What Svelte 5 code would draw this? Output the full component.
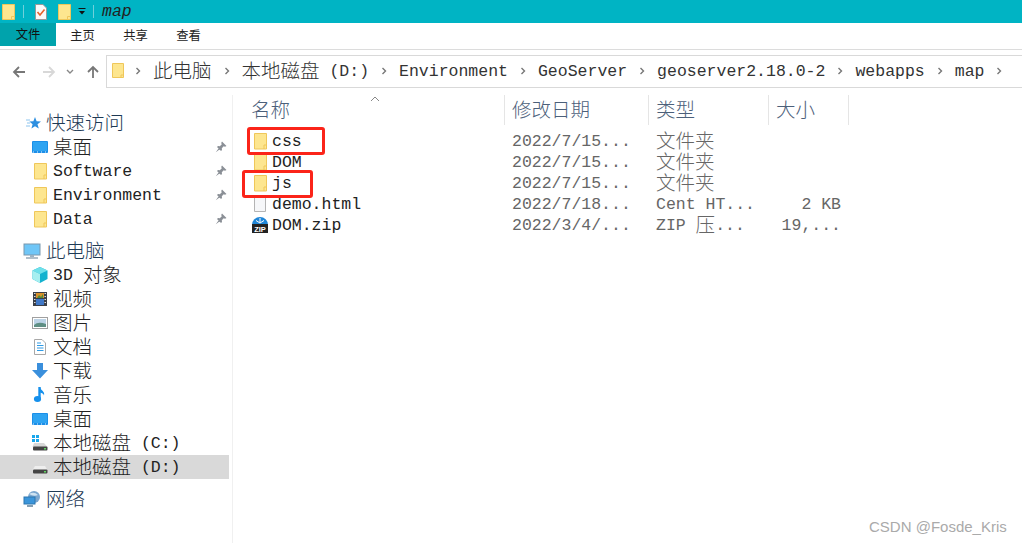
<script>
  const quick = [
    { label: '桌面', icon: 'desktop' },
    { label: 'Software', icon: 'folder' },
    { label: 'Environment', icon: 'folder' },
    { label: 'Data', icon: 'folder' }
  ];
  const pc = [
    { label: '3D 对象', icon: 'cube' },
    { label: '视频', icon: 'video' },
    { label: '图片', icon: 'picture' },
    { label: '文档', icon: 'docs' },
    { label: '下载', icon: 'download' },
    { label: '音乐', icon: 'music' },
    { label: '桌面', icon: 'desktop' },
    { label: '本地磁盘 (C:)', icon: 'sysdrive' },
    { label: '本地磁盘 (D:)', icon: 'drive', selected: true }
  ];
  const crumbs = ['此电脑', '本地磁盘 (D:)', 'Environment', 'GeoServer', 'geoserver2.18.0-2', 'webapps', 'map'];
  const files = [
    { name: 'css', date: '2022/7/15...', type: '文件夹', size: '', icon: 'folder' },
    { name: 'DOM', date: '2022/7/15...', type: '文件夹', size: '', icon: 'folder' },
    { name: 'js', date: '2022/7/15...', type: '文件夹', size: '', icon: 'folder' },
    { name: 'demo.html', date: '2022/7/18...', type: 'Cent HT...', size: '2 KB', icon: 'page' },
    { name: 'DOM.zip', date: '2022/3/4/...', type: 'ZIP 压...', size: '19,...', icon: 'zip' }
  ];

  // SimSun sets CJK at twice the width of latin, so split the two
  function runs(text) {
    return text.split(/([\u3000-\u9fff]+)/).filter(Boolean).map((t) => ({
      t,
      cjk: /[\u3000-\u9fff]/.test(t)
    }));
  }
</script>

{#snippet txt(text)}
  <span class="line">{#each runs(text) as r}<span class={r.cjk ? 'cjk' : 'lat'}>{r.t}</span>{/each}</span>
{/snippet}

{#snippet chevron()}
  <svg class="chev" width="6" height="8" viewBox="0 0 6 8"><path d="M1.5 1 L4.5 4 L1.5 7" fill="none" stroke="#777" stroke-width="1.4"/></svg>
{/snippet}

{#snippet icon(name)}
  <svg class="ico" width="18" height="18" viewBox="0 0 18 18">
    {#if name === 'folder'}
      <path d="M3.5 1.5 H15.5 V17 H3.5 Z" fill="#fde68f" stroke="#efc75a"/>
      <path d="M13 17 V13 H15.5" fill="none" stroke="#efc75a"/>
    {:else if name === 'desktop'}
      <rect x="1" y="3" width="16" height="12" rx="1" fill="#1c8fe8"/>
      <path d="M2 4 H16 V13 H2 Z" fill="#2ea4f2"/>
      <path d="M2 14 H16" stroke="#e6f4ff" stroke-dasharray="1 3"/>
    {:else if name === 'cube'}
      <path d="M9 1 L16.5 4.5 V13 L9 17 L1.5 13 V4.5 Z" fill="#14b2cf"/>
      <path d="M9 1 L16.5 4.5 L9 8 L1.5 4.5 Z" fill="#6fe0ea"/>
      <path d="M1.5 4.5 L9 8 V17 L1.5 13 Z" fill="#a6eff0"/>
    {:else if name === 'video'}
      <rect x="2" y="2" width="14" height="14" fill="#3a3f48"/>
      <path d="M3 3.5 h1.5 M3 6.5 h1.5 M3 9.5 h1.5 M3 12.5 h1.5 M13.5 3.5 h1.5 M13.5 6.5 h1.5 M13.5 9.5 h1.5 M13.5 12.5 h1.5" stroke="#ddd"/>
      <rect x="5" y="3" width="8" height="5" fill="#d8912a"/>
      <rect x="5" y="9" width="8" height="6" fill="#3f78c8"/>
      <path d="M6 8 L8 5 L10 7 L12 4 V8 Z" fill="#4f8a3a"/>
    {:else if name === 'picture'}
      <rect x="1.5" y="3.5" width="15" height="11" fill="#fff" stroke="#a0a0a0"/>
      <rect x="3" y="5" width="12" height="8" fill="#bcd3e6"/>
      <path d="M3 11 Q7 7 15 10 V13 H3 Z" fill="#5f8f84"/>
    {:else if name === 'docs'}
      <path d="M3.5 1.5 H11 L14.5 5 V16.5 H3.5 Z" fill="#fff" stroke="#a8a8a8"/>
      <path d="M6 5 H10 M6 7.5 H12.5 M6 10 H12.5 M6 12.5 H12.5" stroke="#2f9be6"/>
    {:else if name === 'download'}
      <path d="M6 1 H12 V8 H17 L9 16.5 L1 8 H6 Z" fill="#3a8fdc"/>
    {:else if name === 'music'}
      <path d="M8.5 1 V12" stroke="#1590ec" stroke-width="2.4" fill="none"/>
      <ellipse cx="6.5" cy="13" rx="3.6" ry="3" fill="#1590ec"/>
      <path d="M9 1 C10 5 14 5 13 9.5 C12.5 7.5 11 7 9 6.5 Z" fill="#1590ec"/>
    {:else if name === 'sysdrive'}
      <rect x="1" y="1" width="3" height="3" fill="#1aa7ec"/><rect x="5" y="1" width="3" height="3" fill="#1aa7ec"/>
      <rect x="1" y="5" width="3" height="3" fill="#1aa7ec"/><rect x="5" y="5" width="3" height="3" fill="#1aa7ec"/>
      <path d="M3 9 H13 L16.5 13 H1.5 Z" fill="#d8d8d8"/>
      <rect x="2" y="12.5" width="14.5" height="4" rx="1" fill="#444"/>
      <rect x="13" y="14" width="2" height="1.5" fill="#5fd35f"/>
    {:else if name === 'drive'}
      <path d="M4 8 H14 L16.5 12 H1.5 Z" fill="#eee"/>
      <rect x="2" y="11.5" width="14.5" height="4" rx="1" fill="#444"/>
      <rect x="13" y="13" width="2" height="1.5" fill="#5fd35f"/>
    {:else if name === 'page'}
      <path d="M3.5 1.5 H14.5 V16.5 H3.5 Z" fill="#f6f7f9" stroke="#b4b4b4"/>
    {:else if name === 'zip'}
      <path d="M1 9 A8 8 0 0 1 17 9 Z" fill="#1f86d8"/>
      <path d="M5 4.5 L9 7 L13 4.5 M9 2 V6.5" stroke="#fff" fill="none"/>
      <rect x="1" y="8" width="16" height="9" fill="#222"/>
      <text x="9" y="15.6" font-size="7.5" font-weight="700" text-anchor="middle" fill="#fff" font-family="Liberation Sans, sans-serif">ZIP</text>
    {/if}
  </svg>
{/snippet}

{#snippet pin()}
  <svg class="pin" width="12" height="12" viewBox="0 0 12 12"><path d="M7 0.5 L11.5 5 L10 5.8 L8.7 5.2 L6.8 7.2 L7 9 L6 10 L2 6 L3 5 L4.8 5.2 L6.8 3.3 L6.2 2 Z M3.5 7.5 L0.8 11.2 L4.5 8.5 Z" fill="#8a8f96"/></svg>
{/snippet}

<div class="win">
  <header class="title">
    <svg class="t-ico" width="16" height="18" viewBox="0 0 16 18"><path d="M2.5 1.5 H14.5 V16.5 H2.5 Z" fill="#fde68f" stroke="#efc75a"/><path d="M11.5 16.5 V13.5 H14.5" fill="none" stroke="#efc75a"/></svg>
    <i class="sep"></i>
    <svg class="t-doc" width="14" height="18" viewBox="0 0 14 18"><path d="M1.5 1.5 H9 L12.5 5 V16.5 H1.5 Z" fill="#fafafa" stroke="#999"/><path d="M3.5 9 L6 12 L10.5 6.5" fill="none" stroke="#e8622c" stroke-width="1.6"/></svg>
    <svg class="t-folder" width="16" height="18" viewBox="0 0 16 18"><path d="M2.5 1.5 H14.5 V16.5 H2.5 Z" fill="#fde68f" stroke="#efc75a"/><path d="M11.5 16.5 V13.5 H14.5" fill="none" stroke="#efc75a"/></svg>
    <svg class="t-drop" width="8" height="8" viewBox="0 0 8 8"><path d="M0.5 0.5 H7.5" stroke="#111"/><path d="M1 3 H7 L4 6.5 Z" fill="#111"/></svg>
    <i class="sep sep2"></i>
    <span class="t-name">map</span>
  </header>

  <nav class="tabs">
    <span class="tab first">文件</span>
    <span class="tab">主页</span>
    <span class="tab">共享</span>
    <span class="tab">查看</span>
  </nav>

  <div class="bar">
    <div class="arrows">
      <svg width="14" height="14" viewBox="0 0 14 14"><path d="M13 7 H2 M7 2 L2 7 L7 12" fill="none" stroke="#777" stroke-width="1.8"/></svg>
      <svg class="fwd" width="14" height="14" viewBox="0 0 14 14"><path d="M1 7 H12 M7 2 L12 7 L7 12" fill="none" stroke="#d8d8d8" stroke-width="1.8"/></svg>
      <svg class="dn" width="8" height="6" viewBox="0 0 8 6"><path d="M1 1 L4 4 L7 1" fill="none" stroke="#888" stroke-width="1.4"/></svg>
      <svg class="up" width="14" height="14" viewBox="0 0 14 14"><path d="M7 13 V2 M2 7 L7 2 L12 7" fill="none" stroke="#777" stroke-width="1.8"/></svg>
    </div>
    <div class="addr">
      <svg class="a-folder" width="14" height="17" viewBox="0 0 14 17"><path d="M1.5 1.5 H12.5 V15.5 H1.5 Z" fill="#fde68f" stroke="#efc75a"/><path d="M10 15.5 V13 H12.5" fill="none" stroke="#efc75a"/></svg>
      {@render chevron()}
      {#each crumbs as c}
        <span class="crumb">{@render txt(c)}</span>
        {@render chevron()}
      {/each}
    </div>
  </div>

  <main class="body">
    <aside class="side">
      <div class="row top">
        <svg class="head-ico" width="15" height="15" viewBox="0 0 15 15"><path d="M9 1 L10.6 5.2 L15 5.4 L11.5 8.2 L12.8 12.6 L9 10.2 L5.4 12.6 L6.6 8.2 L3.4 5.4 L7.4 5.2 Z" fill="#2d8fe0"/><path d="M0 4 H4 M1 7 H4 M0 10 H4" stroke="#8cc4ee"/></svg>
        {@render txt('快速访问')}
      </div>
      {#each quick as q}
        <div class="row child">
          {@render icon(q.icon)}
          <span class="grow">{@render txt(q.label)}</span>
          {@render pin()}
        </div>
      {/each}

      <div class="row top gap">
        <svg class="head-ico pc" width="18" height="18" viewBox="0 0 18 18"><rect x="1" y="2" width="16" height="11" fill="#6fc6f7" stroke="#7a97ad"/><path d="M7 13 H11 V15 H7 Z" fill="#9cb2c2"/><path d="M3 16 H15" stroke="#8ea2b2" stroke-width="1.4"/></svg>
        {@render txt('此电脑')}
      </div>
      {#each pc as p}
        <div class="row child" class:sel={p.selected}>
          {@render icon(p.icon)}
          <span class="grow">{@render txt(p.label)}</span>
        </div>
      {/each}

      <div class="row top gap">
        <svg class="head-ico pc" width="18" height="18" viewBox="0 0 18 18"><circle cx="11" cy="7" r="6" fill="#7aa6cf"/><path d="M6 4 Q11 1 15 5 Q11 7 6 4" fill="#cfe3f2"/><rect x="1" y="7" width="11" height="7" fill="#3b95da" stroke="#2d76b0"/><path d="M4 16 H10" stroke="#5d7f99" stroke-width="1.5"/></svg>
        {@render txt('网络')}
      </div>
    </aside>

    <section class="list">
      <div class="head">
        <div class="hc name">{@render txt('名称')}
          <svg class="sort" width="10" height="6" viewBox="0 0 10 6"><path d="M1 5 L5 1 L9 5" fill="none" stroke="#888"/></svg>
        </div>
        <div class="hc">{@render txt('修改日期')}</div>
        <div class="hc">{@render txt('类型')}</div>
        <div class="hc">{@render txt('大小')}</div>
      </div>
      <div class="rows">
        {#each files as f}
          <div class="frow">
            <div class="f-name">{@render icon(f.icon)}{@render txt(f.name)}</div>
            <div class="f-col">{@render txt(f.date)}</div>
            <div class="f-col">{@render txt(f.type)}</div>
            <div class="f-col f-size">{@render txt(f.size)}</div>
          </div>
        {/each}
      </div>
    </section>
  </main>

  <div class="mark mark1"></div>
  <div class="mark mark2"></div>
  <div class="wm">CSDN @Fosde_Kris</div>
</div>

<style>
  :global(body) {
    margin: 0;
    background: #fff;
  }

  .win {
    position: relative;
    width: 1022px;
    height: 543px;
    overflow: hidden;
    background: #fff;
    color: #222;
    font-family: "Liberation Mono", monospace;
  }

  /* one fixed line box, so rows with CJK and rows without sit alike */
  .line {
    display: block;
    height: 20px;
    line-height: 22px;
    white-space: pre;
  }
  .lat { font-size: 16.5px; line-height: 0; }
  .cjk {
    font-family: "Noto Sans CJK SC", sans-serif;
    font-size: 19.5px;
    font-weight: 300;
    line-height: 0;
    vertical-align: -2px;
  }

  .title {
    height: 23px;
    background: #00b4c4;
    display: flex;
    align-items: center;
  }
  .sep { width: 1px; height: 13px; background: #6fd0da; margin-left: 7px; }
  .t-doc { margin-left: 10px; }
  .t-folder { margin-left: 8px; }
  .t-drop { margin-left: 6px; }
  .sep2 { margin-left: 7px; }
  .t-name { margin-left: 8px; font-style: italic; font-size: 16.5px; color: #222; }

  .tabs {
    height: 23px;
    display: flex;
    align-items: center;
    font-family: "Noto Sans CJK SC", sans-serif;
    font-size: 12.3px;
  }
  .tab { width: 53px; text-align: center; color: #222; }
  .tab.first {
    width: 56px;
    height: 23px;
    line-height: 23px;
    background: #00a3ac;
    color: #111;
  }

  .bar {
    margin-top: 3px;
    height: 39px;
    border-top: 1px solid #dcdcdc;
    display: flex;
    align-items: flex-end;
    box-sizing: border-box;
  }
  .arrows {
    width: 106px;
    height: 32px;
    flex: none;
    display: flex;
    align-items: center;
    padding-left: 12px;
    box-sizing: border-box;
  }
  .fwd { margin-left: 16px; }
  .dn { margin-left: 10px; }
  .up { margin-left: 12px; }

  .addr {
    flex: 1;
    height: 33px;
    min-width: 0;
    box-sizing: border-box;
    border: 1px solid #d9d9d9;
    border-right: 0;
    display: flex;
    align-items: center;
    padding: 0 0 2px 4px;
    color: #333;
  }
  .a-folder { margin-right: 10px; flex: none; }
  .chev { flex: none; margin-right: 12px; }
  .crumb { margin-right: 12px; flex: none; }

  .body {
    display: flex;
    height: 455px;
  }

  .side {
    width: 233px;
    flex: none;
    margin-top: 7px;
    border-right: 1px solid #f0f0f0;
    box-sizing: border-box;
    padding-top: 16px;
  }
  .row {
    height: 24px;
    display: flex;
    align-items: center;
    color: #222;
    width: 229px;
    box-sizing: border-box;
  }
  .top { padding-left: 26px; }
  .top :global(.cjk) { color: #1e3a55; }
  .head-ico { margin-right: 5px; flex: none; }
  .head-ico.pc { margin-left: -3px; margin-right: 5px; }
  .gap { margin-top: 8px; }
  .child { padding-left: 31px; }
  .ico { flex: none; margin-right: 4px; }
  .grow { flex: 1; }
  .pin { flex: none; margin-right: 2px; }
  .sel { background: #d9d9d9; }

  .list { flex: 1; }
  .head {
    display: grid;
    grid-template-columns: 272px 144px 120px 80px;
    height: 36px;
    padding-top: 7px;
    box-sizing: border-box;
    color: #4c607a;
  }
  .hc {
    position: relative;
    padding: 5px 0 0 7px;
    height: 30px;
    box-sizing: border-box;
    border-right: 1px solid #e5e5e5;
  }
  .hc :global(.cjk) { color: #4c607a; }
  .hc.name { padding-left: 18px; }
  .sort { position: absolute; left: 137px; top: 1px; }

  .rows { padding-top: 6px; }
  .frow {
    display: grid;
    grid-template-columns: 272px 144px 120px 80px;
    height: 21px;
    align-items: center;
    color: #666;
  }
  .f-name {
    display: flex;
    align-items: center;
    color: #222;
    padding-left: 18px;
  }
  .f-name .ico { margin-right: 3px; }
  .f-col { padding-left: 7px; }
  .f-size { text-align: right; padding-right: 8px; }

  .mark {
    position: absolute;
    box-sizing: border-box;
    border: 3px solid #fb2419;
    border-radius: 3px;
  }
  .mark1 { left: 247px; top: 127px; width: 78px; height: 28px; }
  .mark2 { left: 242px; top: 170px; width: 71px; height: 28px; }

  .wm {
    position: absolute;
    left: 869px;
    top: 518px;
    font-family: "Liberation Sans", sans-serif;
    font-size: 15px;
    color: #aaa;
  }
</style>
